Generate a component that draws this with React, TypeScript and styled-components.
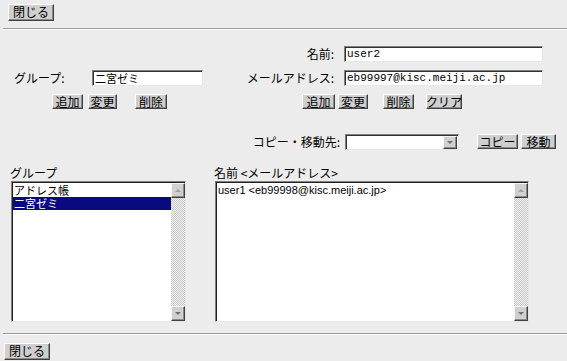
import styled, { createGlobalStyle } from "styled-components";

const GlobalStyle = createGlobalStyle`
  body {
    margin: 0;
    background: #ececec;
    font-family: "Noto Sans CJK JP", "Noto Sans", sans-serif;
    font-size: 12px;
    color: #000;
  }
`;

const Page = styled.div`
  width: 567px;
  height: 361px;
  overflow: hidden;
  display: flex;
  flex-direction: column;
`;

const TopBar = styled.div`
  padding: 3px 0 0 8px;
  height: 17px;
`;

const BottomBar = styled.div`
  padding: 7px 0 0 4px;
`;

const Rule = styled.div<{ $top: number }>`
  margin: ${(p) => p.$top}px 0 0 3px;
  height: 0;
  border-top: 1px solid #9a9a9a;
  border-bottom: 1px solid #ffffff;
`;

const Button = styled.button<{ $h?: number; $w?: number }>`
  box-sizing: border-box;
  height: ${(p) => p.$h ?? 15}px;
  width: ${(p) => (p.$w ? `${p.$w}px` : "auto")};
  padding: 0;
  margin: 0;
  font-family: "Noto Sans CJK JP", sans-serif;
  font-size: 12px;
  line-height: 1;
  white-space: nowrap;
  color: #000;
  background: #cfcfcf;
  border: 1px solid;
  border-color: #ffffff #404040 #404040 #ffffff;
  box-shadow: inset -1px -1px 0 #8a8a8a;
  cursor: pointer;
  display: inline-flex;
  align-items: center;
  justify-content: center;
`;

const Form = styled.div`
  display: grid;
  grid-template-columns: 210px 1fr;
  grid-template-rows: 16px 16px 15px;
  row-gap: 8px;
  margin-top: 16px;
`;

const Field = styled.label<{ $labelWidth: number; $indent: number }>`
  display: flex;
  align-items: center;
  padding-left: ${(p) => p.$indent}px;
  & > span {
    width: ${(p) => p.$labelWidth}px;
    flex: none;
    line-height: 1;
  }
`;

const RightLabel = styled.span`
  text-align: right;
  margin-right: 10px;
`;

const TextInput = styled.input<{ $w: number }>`
  box-sizing: border-box;
  width: ${(p) => p.$w}px;
  height: 16px;
  margin: 0;
  padding: 0 2px;
  font-family: "Liberation Mono", "Noto Sans CJK JP", monospace;
  font-size: 11px;
  color: #000;
  background: #fff;
  border: 1px solid;
  border-color: #808080 #e6e6e6 #e6e6e6 #808080;
  box-shadow: inset 1px 1px 0 #303030;
  outline: none;
`;

const ButtonRow = styled.div<{ $indent: number }>`
  display: flex;
  align-items: flex-start;
  padding-left: ${(p) => p.$indent}px;
`;

const Gap = styled.span<{ $w: number }>`
  width: ${(p) => p.$w}px;
  flex: none;
`;

const CopyRow = styled.div`
  display: flex;
  align-items: center;
  margin-top: 25px;
  padding-left: 240px;
  height: 15px;
`;

const CopyLabel = styled.span`
  width: 100px;
  margin-right: 5px;
  text-align: right;
  line-height: 1;
  white-space: nowrap;
`;

const Select = styled.div`
  box-sizing: border-box;
  width: 114px;
  height: 16px;
  display: flex;
  justify-content: flex-end;
  background: #fff;
  border: 1px solid;
  border-color: #808080 #e6e6e6 #e6e6e6 #808080;
  box-shadow: inset 1px 1px 0 #303030;
  padding: 1px 1px 0 0;
`;

const ArrowBox = styled.div<{ $dir: "up" | "down" }>`
  box-sizing: border-box;
  width: 14px;
  height: 15px;
  flex: none;
  background: #d0d0d0;
  border: 1px solid;
  border-color: #f4f4f4 #404040 #404040 #f4f4f4;
  box-shadow: inset -1px -1px 0 #8a8a8a;
  display: flex;
  align-items: center;
  justify-content: center;
  &::after {
    content: "";
    width: 0;
    height: 0;
    border-left: 3px solid transparent;
    border-right: 3px solid transparent;
    ${(p) =>
      p.$dir === "up"
        ? "border-bottom: 3px solid #a0a0a0;"
        : "border-top: 3px solid #707070;"}
  }
`;

const SelectArrow = styled(ArrowBox)`
  height: 13px;
`;

const Lists = styled.div`
  display: grid;
  grid-template-columns: 175px 314px;
  column-gap: 29px;
  padding-left: 11px;
  margin-top: 18px;
`;

const ListColumn = styled.div`
  display: flex;
  flex-direction: column;
`;

const ListTitle = styled.div`
  height: 12px;
  line-height: 12px;
  margin-left: -1px;
  margin-bottom: 2px;
  white-space: nowrap;
`;

const ListBox = styled.div`
  box-sizing: border-box;
  height: 141px;
  display: flex;
  background: #fff;
  border: 1px solid;
  border-color: #808080 #e6e6e6 #e6e6e6 #808080;
  box-shadow: inset 1px 1px 0 #202020;
  padding: 1px 0 0 1px;
`;

const Items = styled.div`
  flex: 1;
  display: flex;
  flex-direction: column;
  padding-top: 1px;
`;

const Item = styled.div<{ $selected?: boolean }>`
  height: 13px;
  line-height: 13px;
  font-size: 11px;
  padding-left: 1px;
  white-space: nowrap;
  background: ${(p) => (p.$selected ? "#0a0a80" : "transparent")};
  color: ${(p) => (p.$selected ? "#fff" : "#000")};
`;

const AddrItem = styled(Item)`
  font-family: "Liberation Sans", "Noto Sans CJK JP", sans-serif;
`;

const ScrollBar = styled.div`
  width: 14px;
  flex: none;
  display: flex;
  flex-direction: column;
`;

const Track = styled.div`
  flex: 1;
  background: #fff
    repeating-conic-gradient(#c8c8c8 0 25%, #f2f2f2 0 50%) 0 0 / 2px 2px;
`;

const Scroll = () => (
  <ScrollBar>
    <ArrowBox $dir="up" />
    <Track />
    <ArrowBox $dir="down" />
  </ScrollBar>
);

export default function App() {
  return (
    <Page>
      <GlobalStyle />
      <TopBar>
        <Button $h={17} $w={46}>閉じる</Button>
      </TopBar>
      <Rule $top={8} />

      <Form>
        <div />
        <Field $labelWidth={124} $indent={0}>
          <RightLabel>名前:</RightLabel>
          <TextInput $w={199} defaultValue="user2" />
        </Field>

        <Field $labelWidth={78} $indent={14}>
          <span>グループ:</span>
          <TextInput $w={111} defaultValue="二宮ゼミ" />
        </Field>
        <Field $labelWidth={124} $indent={0}>
          <RightLabel>メールアドレス:</RightLabel>
          <TextInput $w={199} defaultValue="eb99997@kisc.meiji.ac.jp" />
        </Field>

        <ButtonRow $indent={52}>
          <Button $w={31}>追加</Button>
          <Gap $w={5} />
          <Button $w={29}>変更</Button>
          <Gap $w={18} />
          <Button $w={32}>削除</Button>
        </ButtonRow>
        <ButtonRow $indent={92}>
          <Button $w={33}>追加</Button>
          <Gap $w={3} />
          <Button $w={30}>変更</Button>
          <Gap $w={15} />
          <Button $w={31}>削除</Button>
          <Gap $w={12} />
          <Button $w={36}>クリア</Button>
        </ButtonRow>
      </Form>

      <CopyRow>
        <CopyLabel>コピー・移動先:</CopyLabel>
        <Select>
          <SelectArrow $dir="down" />
        </Select>
        <Gap $w={18} />
        <Button $w={41}>コピー</Button>
        <Gap $w={3} />
        <Button $w={35}>移動</Button>
      </CopyRow>

      <Lists>
        <ListColumn>
          <ListTitle>グループ</ListTitle>
          <ListBox>
            <Items>
              <Item>アドレス帳</Item>
              <Item $selected>二宮ゼミ</Item>
            </Items>
            <Scroll />
          </ListBox>
        </ListColumn>
        <ListColumn>
          <ListTitle>名前 &lt;メールアドレス&gt;</ListTitle>
          <ListBox>
            <Items>
              <AddrItem>user1 &lt;eb99998@kisc.meiji.ac.jp&gt;</AddrItem>
            </Items>
            <Scroll />
          </ListBox>
        </ListColumn>
      </Lists>

      <Rule $top={11} />
      <BottomBar>
        <Button $h={17} $w={46}>閉じる</Button>
      </BottomBar>
    </Page>
  );
}
